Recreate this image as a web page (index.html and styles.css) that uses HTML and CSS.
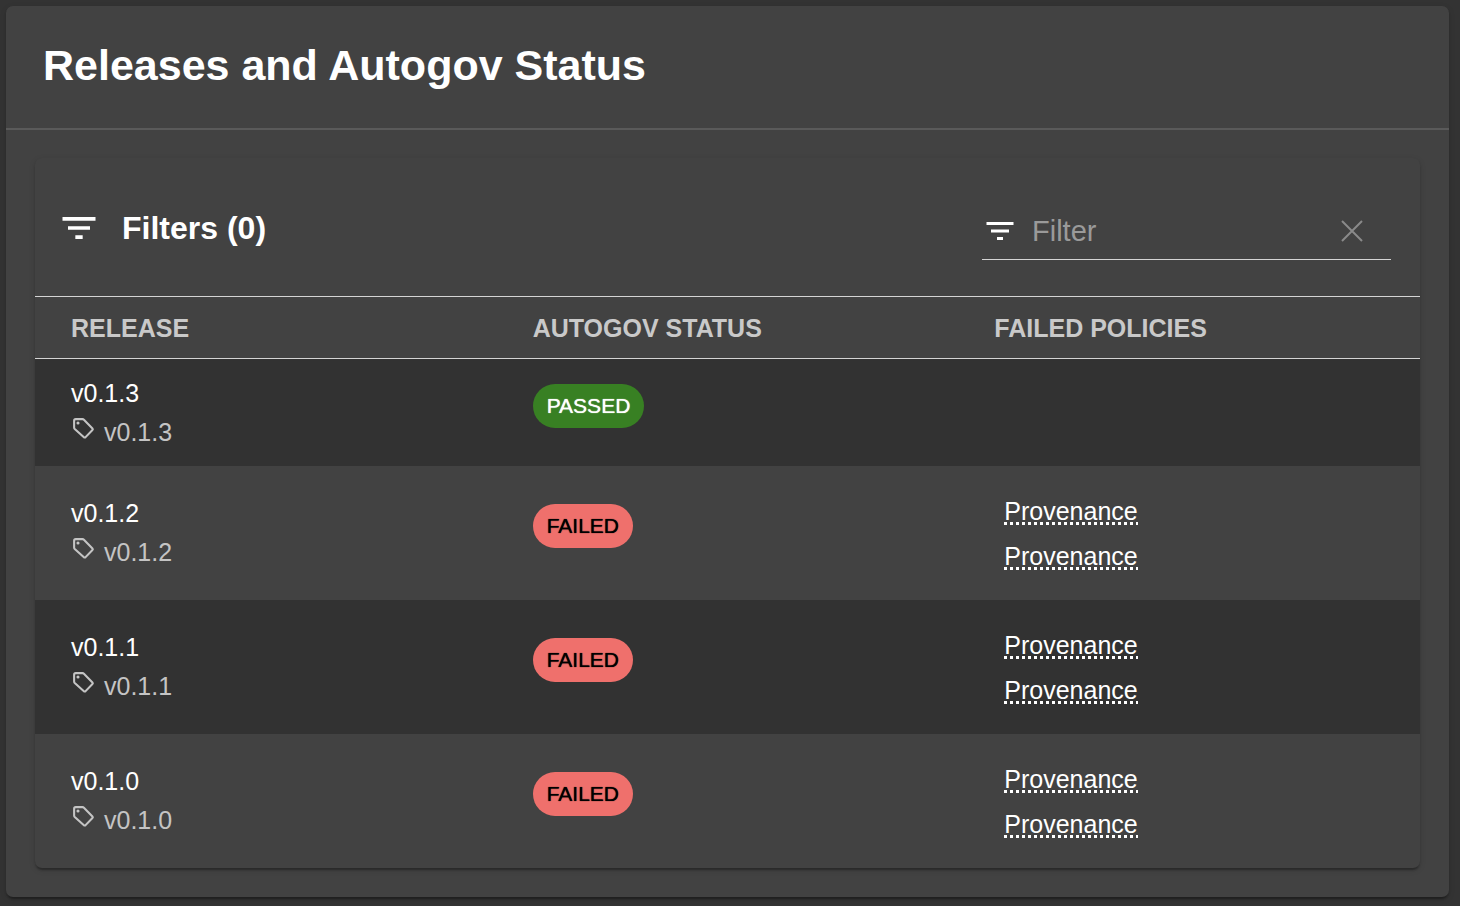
FILE: index.html
```html
<!DOCTYPE html>
<html lang="en">
<head>
<meta charset="utf-8">
<title>Releases and Autogov Status</title>
<link rel="stylesheet" href="styles.css">
</head>
<body>
<svg class="sprite" aria-hidden="true">
  <symbol id="filter" viewBox="0 0 24 24"><path d="M10 18h4v-2h-4v2zM3 6v2h18V6H3zm3 7h12v-2H6v2z"/></symbol>
  <symbol id="tag" viewBox="0 0 24 24"><path d="M3 4.500Q3 3 4.500 3H11Q11.800 3 12.400 3.600L20.600 12Q21.300 12.700 20.600 13.400L14 20.300Q13.200 21.100 12.400 20.300L3.600 12.500Q3 11.900 3 11Z" fill="none" stroke="currentColor" stroke-width="2"/><circle cx="6.700" cy="6.700" r="1.500"/></symbol>
</svg>
<main class="card">
  <header class="card-header"><h1 class="title">Releases and Autogov Status</h1></header>
  <div class="card-body">
    <section class="panel">
      <div class="toolbar">
        <button class="filters" type="button"><svg class="icon-large" aria-hidden="true"><use href="#filter"/></svg>Filters (0)</button>
        <div class="search">
          <svg class="icon-medium" aria-hidden="true"><use href="#filter"/></svg>
          <input class="search-input" type="text" placeholder="Filter" aria-label="Filter">
          <button class="clear" type="button" aria-label="Clear filter"><svg class="icon-clear" viewBox="0 0 24 24" aria-hidden="true"><path d="M2 2l20 20M22 2L2 22"/></svg></button>
        </div>
      </div>
      <table class="releases">
        <thead><tr><th>RELEASE</th><th>AUTOGOV STATUS</th><th>FAILED POLICIES</th></tr></thead>
        <tbody>
          <tr>
            <td><div class="name">v0.1.3</div><div class="tag"><svg class="icon-tag" aria-hidden="true"><use href="#tag"/></svg>v0.1.3</div></td>
            <td><span class="chip passed">PASSED</span></td>
            <td></td>
          </tr>
          <tr>
            <td><div class="name">v0.1.2</div><div class="tag"><svg class="icon-tag" aria-hidden="true"><use href="#tag"/></svg>v0.1.2</div></td>
            <td><span class="chip failed">FAILED</span></td>
            <td><ul class="policies"><li><a class="policy" href="#">Provenance</a></li><li><a class="policy" href="#">Provenance</a></li></ul></td>
          </tr>
          <tr>
            <td><div class="name">v0.1.1</div><div class="tag"><svg class="icon-tag" aria-hidden="true"><use href="#tag"/></svg>v0.1.1</div></td>
            <td><span class="chip failed">FAILED</span></td>
            <td><ul class="policies"><li><a class="policy" href="#">Provenance</a></li><li><a class="policy" href="#">Provenance</a></li></ul></td>
          </tr>
          <tr>
            <td><div class="name">v0.1.0</div><div class="tag"><svg class="icon-tag" aria-hidden="true"><use href="#tag"/></svg>v0.1.0</div></td>
            <td><span class="chip failed">FAILED</span></td>
            <td><ul class="policies"><li><a class="policy" href="#">Provenance</a></li><li><a class="policy" href="#">Provenance</a></li></ul></td>
          </tr>
        </tbody>
      </table>
    </section>
  </div>
</main>
</body>
</html>
```
FILE: styles.css
```css
* { box-sizing: border-box; }
body {
  margin: 0;
  padding: 6px 11px 9px 6px;
  background: #333;
  color: #fff;
  font: 25px/39px "Liberation Sans", Arial, sans-serif;
}
svg { fill: currentColor; flex: none; }
.sprite { position: absolute; width: 0; height: 0; }
button { border: 0; padding: 0; background: none; color: inherit; font: inherit; display: flex; align-items: center; }
.card, .panel {
  background: #424242;
  border-radius: 7px;
  box-shadow: 0 4px 2px -2px rgba(0, 0, 0, .2), 0 2px 2px rgba(0, 0, 0, .14), 0 2px 6px rgba(0, 0, 0, .12);
}
.card-header { padding: 34px 37px 38px; border-bottom: 2px solid #5a5a5a; }
.title { margin: 0; font-size: 43px; line-height: 50px; }
.card-body { padding: 28px 29px 29px; }
.toolbar {
  display: flex;
  align-items: flex-start;
  justify-content: space-between;
  padding: 42px 29px 36px 22px;
}
.filters { gap: 21px; height: 56px; font-size: 32px; font-weight: bold; }
.icon-large { width: 44px; height: 44px; }
.search {
  display: flex;
  align-items: center;
  width: 409px;
  height: 60px;
  padding-top: 2px;
  border-bottom: 1px solid #d4d4d4;
}
.icon-medium { width: 36px; height: 36px; }
.search-input {
  flex: 1;
  min-width: 0;
  border: 0;
  padding: 0 0 0 14px;
  background: none;
  outline: 0;
  color: #fff;
  font: 29px/36px "Liberation Sans", Arial, sans-serif;
}
.search-input::placeholder { color: #9a9a9a; opacity: 1; }
.clear { padding: 0 27px; color: #8a8a8a; }
.icon-clear { width: 24px; height: 24px; stroke: currentColor; stroke-width: 2; }
.releases { width: 100%; table-layout: fixed; border-collapse: separate; border-spacing: 0; }
th {
  padding: 12px 36px 10px;
  border-top: 1px solid #d4d4d4;
  border-bottom: 1px solid #d4d4d4;
  color: #c9c9c9;
  text-align: left;
}
td { height: 107px; padding: 14px 36px; }
tbody tr:nth-child(odd) { background: #323232; }
.tag { display: flex; gap: 8px; color: #c4c4c4; }
.icon-tag { width: 25px; height: 25px; margin-top: 3px; }
.chip {
  display: table;
  margin-bottom: 14px;
  padding: 0 14px;
  border-radius: 22px;
  font-size: 21px;
  line-height: 44px;
  text-shadow: 0 0 1px currentColor;
}
.passed { background: #388023; }
.failed { background: #ef706c; color: #000; }
.policies { margin: 0; padding: 9px 10px 7px; list-style: none; line-height: 45px; }
.policy {
  color: #fff;
  text-decoration: none;
  background: repeating-linear-gradient(90deg, #fff 0 3px, transparent 3px 6px) left bottom / 100% 3px no-repeat;
}
```
